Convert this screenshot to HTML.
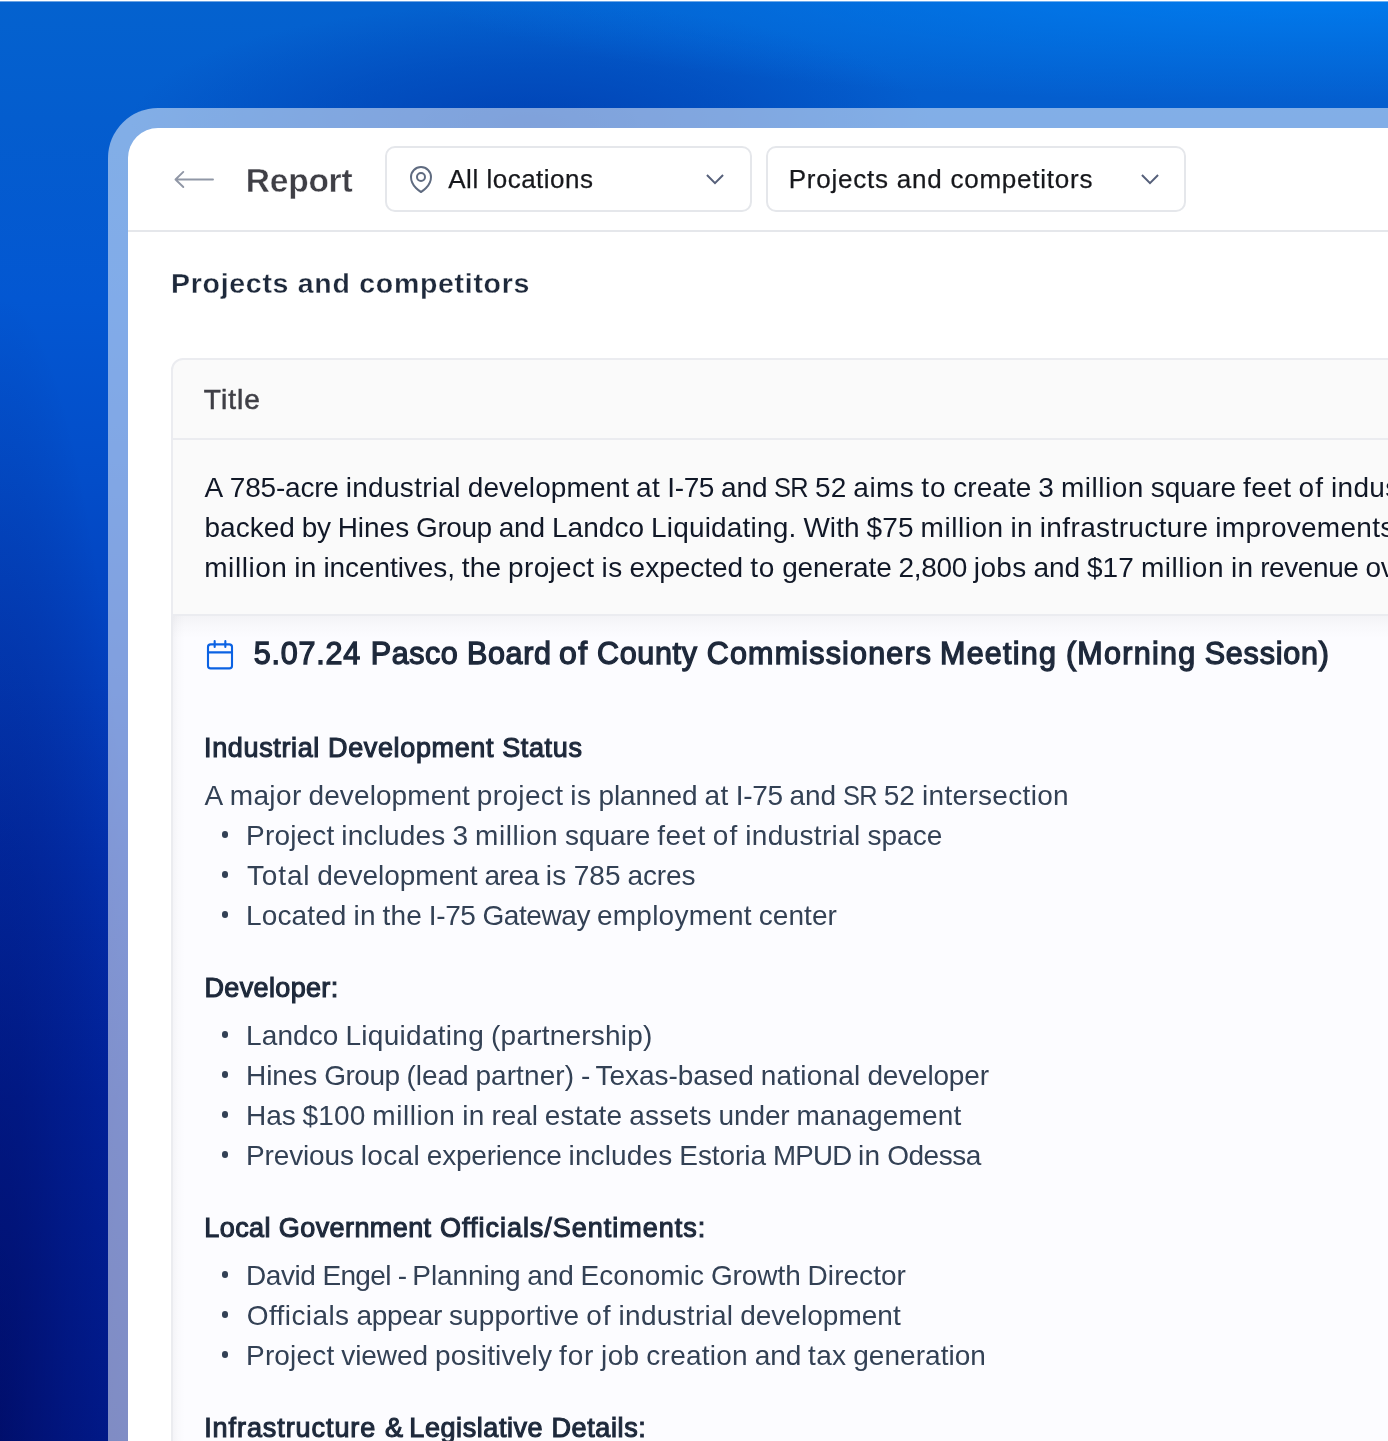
<!DOCTYPE html>
<html lang="en">
<head>
<meta charset="utf-8">
<title>Report</title>
<style>
*{box-sizing:border-box;margin:0;padding:0}
html,body{width:1388px;height:1441px;overflow:hidden}
body{
  position:relative;
  font-family:"Liberation Sans",sans-serif;
  background:
    radial-gradient(ellipse 900px 115px at 1320px -12px, rgba(0,126,242,.92) 0%, rgba(0,126,242,0) 100%),
    radial-gradient(ellipse 400px 120px at 530px 124px, rgba(0,62,176,.82) 0%, rgba(0,62,176,.45) 50%, rgba(0,62,176,0) 100%),
    radial-gradient(ellipse 150px 1150px at 0px 1441px, rgba(0,6,86,.62) 0%, rgba(0,6,86,.3) 45%, rgba(0,6,86,0) 100%),
    linear-gradient(180deg, #0462cf 0px, #045dce 120px, #0357d2 300px, #034dc9 480px, #033fbd 680px, #0231b0 860px, #0124a0 1100px, #011c90 1441px);
}
.topline{position:absolute;left:0;top:0;width:1388px;height:2px;background:linear-gradient(180deg,#fff 0,#fff 1px,rgba(255,255,255,.42) 1px,rgba(255,255,255,.42) 2px)}
.frame{
  position:absolute;left:108px;top:108px;width:1400px;height:1500px;
  border-radius:50px 0 0 0;background:rgba(255,255,255,.5);
}
.app{
  position:absolute;left:128px;top:128px;width:1400px;height:1500px;
  border-radius:30px 0 0 0;background:#fff;overflow:hidden;
}
.hdr{position:absolute;left:0;top:0;width:100%;height:104px;border-bottom:2px solid #e5e7eb}
.abs{position:absolute;white-space:nowrap}
.sel{position:absolute;top:18px;height:66px;border:2px solid #e5e7eb;border-radius:10px;background:#fff}
.t{position:absolute;white-space:nowrap;line-height:40px;height:40px}
.txt{position:absolute;left:0;top:0;width:1388px;height:1441px;overflow:hidden;will-change:transform}
.w span{position:absolute;top:0;left:0;transform-origin:0 50%}
.bul{position:absolute;width:6.400px;height:6.400px;border-radius:50%;background:#334155}
</style>
</head>
<body>
<div class="topline"></div>
<div class="frame"></div>
<div class="app">
  <div class="hdr">
    <svg class="abs" style="left:45px;top:40px" width="44" height="24" viewBox="0 0 44 24" fill="none" stroke="#9097a6" stroke-width="1.9" stroke-linecap="round" stroke-linejoin="round"><path d="M40 11.450H2.500M10.300 3.900L2.500 11.450l7.800 7.550"/></svg>
    <div class="sel" style="left:257px;width:367px">
      <svg class="abs" style="left:18px;top:15px" width="32" height="32" viewBox="0 0 24 24" fill="none" stroke="#5f6b80" stroke-width="1.5" stroke-linecap="round" stroke-linejoin="round"><path d="M15 10.500a3 3 0 1 1-6 0 3 3 0 0 1 6 0z"/><path d="M19.500 10.500c0 7.142-7.500 11.250-7.500 11.250S4.500 17.642 4.500 10.500a7.500 7.500 0 1 1 15 0z"/></svg>
      <svg class="abs" style="left:317.800px;top:24.900px;overflow:visible" width="20" height="12" viewBox="0 0 20 12" fill="none" stroke="#56607a" stroke-width="2" stroke-linejoin="miter"><path d="M1.950 2l8.050 8.100 8.050-8.100"/></svg>
    </div>
    <div class="sel" style="left:638px;width:420px">
      <svg class="abs" style="left:371.750px;top:24.900px;overflow:visible" width="20" height="12" viewBox="0 0 20 12" fill="none" stroke="#56607a" stroke-width="2" stroke-linejoin="miter"><path d="M1.950 2l8.050 8.100 8.050-8.100"/></svg>
    </div>
  </div>
  <div class="tbl" style="position:absolute;left:43px;top:230px;width:1400px;height:1300px;border:2px solid #ebecf0;border-radius:12px 0 0 0;background:#fafafa;overflow:hidden">
    <div style="position:absolute;left:0;top:0;width:100%;height:80px;border-bottom:2px solid #ebecf0"></div>
    <div style="position:absolute;left:0;top:254px;width:100%;height:1100px;border-top:2px solid #ebecf0;background:linear-gradient(90deg,rgba(20,20,40,.035) 0,rgba(20,20,40,.012) 5px,rgba(20,20,40,0) 12px),linear-gradient(180deg,#f3f3f6 0,#f8f8fb 9px,#fcfcff 22px)"></div>
  </div>
</div>
<div class="txt">
<div class="t" id="report" style="left:245.84px;top:161.00px;font-size:33.5px;color:#3f3f46;font-weight:700;-webkit-text-stroke:0.4px #fff;letter-spacing:-0.243px">Report</div>
<div class="t" id="allloc" style="left:448.28px;top:159.00px;font-size:26px;color:#17181c;-webkit-text-stroke:0.25px #17181c;letter-spacing:0.501px">All locations</div>
<div class="t" id="sel2" style="left:788.71px;top:159.00px;font-size:26px;color:#17181c;-webkit-text-stroke:0.25px #17181c;letter-spacing:0.766px">Projects and competitors</div>
<div class="t" id="h1" style="left:171.07px;top:263.00px;font-size:28.5px;color:#1e293b;font-weight:700;-webkit-text-stroke:0.3px #fff;letter-spacing:0.706px">Projects and competitors</div>
<div class="t" id="thtitle" style="left:203.78px;top:380.00px;font-size:28px;color:#3f3f46;-webkit-text-stroke:0.55px #3f3f46;letter-spacing:1.080px">Title</div>
<div class="t w" id="s1" style="left:204.60px;top:468.00px;font-size:28px;color:#111827"><span style="left:0.00px;letter-spacing:-0.431px">A</span> <span style="left:25.17px;letter-spacing:-0.193px">785-acre</span> <span style="left:141.06px;letter-spacing:0.317px">industrial</span> <span style="left:263.21px;letter-spacing:0.087px">development</span> <span style="left:431.43px;letter-spacing:0.500px">at</span> <span style="left:462.70px;letter-spacing:-0.378px">I-75</span> <span style="left:516.36px;letter-spacing:-0.099px">and</span> <span style="left:569.71px;letter-spacing:-0.800px;transform:scaleX(0.9066)">SR</span> <span style="left:610.45px;letter-spacing:0.133px">52</span> <span style="left:648.78px;letter-spacing:0.455px">aims</span> <span style="left:716.65px;letter-spacing:0.868px">to</span> <span style="left:748.66px;letter-spacing:0.045px">create</span> <span style="left:833.67px;letter-spacing:0.132px">3</span> <span style="left:856.30px;letter-spacing:0.528px">million</span> <span style="left:946.28px;letter-spacing:-0.063px">square</span> <span style="left:1038.44px;letter-spacing:0.445px">feet</span> <span style="left:1093.84px;letter-spacing:1.155px">of</span> <span id="s1_m" style="left:1126.43px;letter-spacing:0.317px">industrial</span> <span style="left:1248.58px;letter-spacing:-0.370px">space,</span></div>
<div class="t w" id="s2" style="left:204.53px;top:508.00px;font-size:28px;color:#111827"><span style="left:0.00px;letter-spacing:0.013px">backed</span> <span style="left:97.30px;letter-spacing:-0.315px">by</span> <span style="left:133.17px;letter-spacing:-0.029px">Hines</span> <span style="left:211.54px;letter-spacing:-0.437px">Group</span> <span style="left:294.11px;letter-spacing:-0.090px">and</span> <span style="left:347.48px;letter-spacing:0.043px">Landco</span> <span style="left:446.53px;letter-spacing:0.183px">Liquidating.</span> <span style="left:598.88px;letter-spacing:0.045px">With</span> <span style="left:661.99px;letter-spacing:0.143px">$75</span> <span style="left:716.06px;letter-spacing:0.535px">million</span> <span style="left:806.09px;letter-spacing:0.220px">in</span> <span style="left:835.25px;letter-spacing:0.374px">infrastructure</span> <span id="s2_m" style="left:1010.81px;letter-spacing:0.281px">improvements</span> <span style="left:1196.95px;letter-spacing:-0.090px">and</span> <span style="left:1250.32px;letter-spacing:0.031px">$55.8</span></div>
<div class="t w" id="s3" style="left:204.28px;top:548.00px;font-size:28px;color:#111827"><span style="left:0.00px;letter-spacing:0.535px">million</span> <span style="left:90.02px;letter-spacing:0.219px">in</span> <span style="left:119.18px;letter-spacing:-0.082px">incentives,</span> <span style="left:257.50px;letter-spacing:0.152px">the</span> <span style="left:303.81px;letter-spacing:0.341px">project</span> <span style="left:397.16px;letter-spacing:0.500px">is</span> <span style="left:425.31px;letter-spacing:-0.002px">expected</span> <span style="left:545.86px;letter-spacing:0.875px">to</span> <span style="left:577.89px;letter-spacing:-0.135px">generate</span> <span style="left:694.27px;letter-spacing:-0.344px">2,800</span> <span style="left:769.55px;letter-spacing:0.352px">jobs</span> <span style="left:829.25px;letter-spacing:-0.090px">and</span> <span style="left:882.63px;letter-spacing:0.142px">$17</span> <span style="left:936.70px;letter-spacing:0.535px">million</span> <span style="left:1026.72px;letter-spacing:0.219px">in</span> <span style="left:1055.88px;letter-spacing:-0.402px">revenue</span> <span id="s3_m" style="left:1161.18px;letter-spacing:-0.164px">over</span> <span style="left:1221.92px;letter-spacing:0.142px">40</span> <span style="left:1260.28px;letter-spacing:-0.282px">years.</span></div>
<div class="t w" id="mt" style="left:253.10px;top:633.00px;font-size:30.5px;color:#1e293b;-webkit-text-stroke:1.3px #1e293b"><span id="mt_0" style="left:0.55px;letter-spacing:0.822px">5.07.24</span> <span id="mt_1" style="left:117.75px;letter-spacing:0.526px">Pasco</span> <span id="mt_2" style="left:213.81px;letter-spacing:0.680px">Board</span> <span id="mt_3" style="left:306.21px;letter-spacing:1.300px;transform:scaleX(1.0476)">of</span> <span id="mt_4" style="left:343.95px;letter-spacing:0.662px">County</span> <span id="mt_5" style="left:453.64px;letter-spacing:1.180px">Commissioners</span> <span id="mt_6" style="left:686.98px;letter-spacing:1.214px">Meeting</span> <span id="mt_7" style="left:812.80px;letter-spacing:1.299px">(Morning</span> <span id="mt_8" style="left:951.63px;letter-spacing:0.796px">Session)</span></div>
<div class="t" id="a0" style="left:204.10px;top:728.00px;font-size:27px;color:#1e293b;-webkit-text-stroke:1.1px #1e293b;letter-spacing:0.629px">Industrial Development Status</div>
<div class="t w" id="a1" style="left:204.55px;top:776.00px;font-size:28px;color:#334155"><span style="left:0.00px;letter-spacing:-0.419px">A</span> <span style="left:25.19px;letter-spacing:0.371px">major</span> <span style="left:103.99px;letter-spacing:0.097px">development</span> <span style="left:272.31px;letter-spacing:0.342px">project</span> <span style="left:365.68px;letter-spacing:0.501px">is</span> <span style="left:393.83px;letter-spacing:-0.063px">planned</span> <span style="left:499.98px;letter-spacing:0.508px">at</span> <span style="left:531.27px;letter-spacing:-0.371px">I-75</span> <span style="left:584.97px;letter-spacing:-0.089px">and</span> <span style="left:638.35px;letter-spacing:-0.800px;transform:scaleX(0.9072)">SR</span> <span style="left:679.11px;letter-spacing:0.143px">52</span> <span style="left:717.48px;letter-spacing:0.312px">intersection</span></div>
<i class="bul" style="left:221.70px;top:831.20px"></i><div class="t w" id="a2" style="left:246.04px;top:816.00px;font-size:28px;color:#334155"><span style="left:0.00px;letter-spacing:0.176px">Project</span> <span style="left:95.30px;letter-spacing:0.175px">includes</span> <span style="left:206.36px;letter-spacing:0.140px">3</span> <span style="left:229.00px;letter-spacing:0.534px">million</span> <span style="left:319.02px;letter-spacing:-0.057px">square</span> <span style="left:411.22px;letter-spacing:0.451px">feet</span> <span style="left:466.66px;letter-spacing:1.161px">of</span> <span style="left:499.26px;letter-spacing:0.323px">industrial</span> <span style="left:621.47px;letter-spacing:0.021px">space</span></div>
<i class="bul" style="left:221.70px;top:871.20px"></i><div class="t w" id="a3" style="left:247.01px;top:856.00px;font-size:28px;color:#334155"><span style="left:0.00px;letter-spacing:0.849px">Total</span> <span style="left:70.27px;letter-spacing:-0.002px">development</span> <span style="left:237.46px;letter-spacing:-0.416px">area</span> <span style="left:298.72px;letter-spacing:0.429px">is</span> <span style="left:326.68px;letter-spacing:0.038px">785</span> <span style="left:380.40px;letter-spacing:-0.066px">acres</span></div>
<i class="bul" style="left:221.70px;top:911.20px"></i><div class="t w" id="a4" style="left:246.04px;top:896.00px;font-size:28px;color:#334155"><span style="left:0.00px;letter-spacing:0.125px">Located</span> <span style="left:107.44px;letter-spacing:0.206px">in</span> <span style="left:136.56px;letter-spacing:0.136px">the</span> <span style="left:182.82px;letter-spacing:-0.386px">I-75</span> <span style="left:236.44px;letter-spacing:-0.412px">Gateway</span> <span style="left:350.97px;letter-spacing:0.229px">employment</span> <span style="left:512.69px;letter-spacing:0.073px">center</span></div>
<div class="t" id="b0" style="left:204.54px;top:968.00px;font-size:27px;color:#1e293b;-webkit-text-stroke:1.1px #1e293b;letter-spacing:0.342px">Developer:</div>
<i class="bul" style="left:221.70px;top:1031.20px"></i><div class="t w" id="b1" style="left:246.04px;top:1016.00px;font-size:28px;color:#334155"><span style="left:0.00px;letter-spacing:0.104px">Landco</span> <span style="left:99.44px;letter-spacing:0.288px">Liquidating</span> <span style="left:245.02px;letter-spacing:0.217px">(partnership)</span></div>
<i class="bul" style="left:221.70px;top:1071.20px"></i><div class="t w" id="b2" style="left:246.04px;top:1056.00px;font-size:28px;color:#334155"><span style="left:0.00px;letter-spacing:-0.071px">Hines</span> <span style="left:78.14px;letter-spacing:-0.482px">Group</span> <span style="left:160.46px;letter-spacing:-0.051px">(lead</span> <span style="left:229.37px;letter-spacing:0.084px">partner)</span> <span style="left:334.99px;letter-spacing:-1.627px">-</span> <span style="left:349.59px;letter-spacing:-0.045px">Texas-based</span> <span style="left:514.77px;letter-spacing:0.205px">national</span> <span style="left:621.39px;letter-spacing:-0.178px">developer</span></div>
<i class="bul" style="left:221.70px;top:1111.20px"></i><div class="t w" id="b3" style="left:246.04px;top:1096.00px;font-size:28px;color:#334155"><span style="left:0.00px;letter-spacing:-0.066px">Has</span> <span style="left:56.52px;letter-spacing:0.140px">$100</span> <span style="left:126.30px;letter-spacing:0.533px">million</span> <span style="left:216.31px;letter-spacing:0.218px">in</span> <span style="left:245.46px;letter-spacing:-0.097px">real</span> <span style="left:298.69px;letter-spacing:0.217px">estate</span> <span style="left:383.20px;letter-spacing:0.257px">assets</span> <span style="left:472.59px;letter-spacing:-0.135px">under</span> <span style="left:550.46px;letter-spacing:0.142px">management</span></div>
<i class="bul" style="left:221.70px;top:1151.20px"></i><div class="t w" id="b4" style="left:246.04px;top:1136.00px;font-size:28px;color:#334155"><span style="left:0.00px;letter-spacing:-0.145px">Previous</span> <span style="left:114.68px;letter-spacing:0.329px">local</span> <span style="left:180.82px;letter-spacing:-0.218px">experience</span> <span style="left:322.53px;letter-spacing:0.135px">includes</span> <span style="left:433.25px;letter-spacing:-0.071px">Estoria</span> <span style="left:526.81px;letter-spacing:-0.800px;transform:scaleX(0.9886)">MPUD</span> <span style="left:612.05px;letter-spacing:0.185px">in</span> <span style="left:641.12px;letter-spacing:-0.476px">Odessa</span></div>
<div class="t w" id="c0" style="left:204.41px;top:1208.00px;font-size:27px;color:#1e293b;-webkit-text-stroke:1.1px #1e293b"><span id="c0_0" style="left:-0.10px;letter-spacing:0.423px">Local</span> <span id="c0_1" style="left:74.44px;letter-spacing:0.410px">Government</span> <span id="c0_2" style="left:235.62px;letter-spacing:0.978px">Officials/Sentiments:</span></div>
<i class="bul" style="left:221.70px;top:1271.20px"></i><div class="t w" id="c1" style="left:246.04px;top:1256.00px;font-size:28px;color:#334155"><span style="left:0.00px;letter-spacing:-0.423px">David</span> <span style="left:76.37px;letter-spacing:-0.636px">Engel</span> <span style="left:151.71px;letter-spacing:-1.630px">-</span> <span style="left:166.31px;letter-spacing:-0.108px">Planning</span> <span style="left:281.34px;letter-spacing:-0.142px">and</span> <span style="left:334.53px;letter-spacing:0.066px">Economic</span> <span style="left:464.90px;letter-spacing:-0.079px">Growth</span> <span style="left:561.58px;letter-spacing:0.039px">Director</span></div>
<i class="bul" style="left:221.70px;top:1311.20px"></i><div class="t w" id="c2" style="left:246.71px;top:1296.00px;font-size:28px;color:#334155"><span style="left:0.00px;letter-spacing:0.415px">Officials</span> <span style="left:109.69px;letter-spacing:-0.250px">appear</span> <span style="left:202.27px;letter-spacing:0.112px">supportive</span> <span style="left:339.47px;letter-spacing:1.094px">of</span> <span style="left:371.90px;letter-spacing:0.262px">industrial</span> <span style="left:493.47px;letter-spacing:0.018px">development</span></div>
<i class="bul" style="left:221.70px;top:1351.20px"></i><div class="t w" id="c3" style="left:246.04px;top:1336.00px;font-size:28px;color:#334155"><span style="left:0.00px;letter-spacing:0.170px">Project</span> <span style="left:95.26px;letter-spacing:-0.068px">viewed</span> <span style="left:188.94px;letter-spacing:0.201px">positively</span> <span style="left:313.03px;letter-spacing:0.817px">for</span> <span style="left:355.08px;letter-spacing:0.319px">job</span> <span style="left:400.33px;letter-spacing:0.229px">creation</span> <span style="left:508.70px;letter-spacing:-0.098px">and</span> <span style="left:562.05px;letter-spacing:0.287px">tax</span> <span style="left:607.19px;letter-spacing:0.042px">generation</span></div>
<div class="t w" id="d0" style="left:204.07px;top:1408.00px;font-size:27px;color:#1e293b;-webkit-text-stroke:1.1px #1e293b"><span id="d0_0" style="left:0.10px;letter-spacing:0.930px">Infrastructure</span> <span id="d0_1" style="left:180.97px;letter-spacing:0.000px">&amp;</span> <span id="d0_2" style="left:205.24px;letter-spacing:0.574px">Legislative</span> <span id="d0_3" style="left:347.41px;letter-spacing:0.611px">Details:</span></div>
<svg class="abs" style="left:204px;top:638.50px" width="32" height="32" viewBox="0 0 24 24" fill="none" stroke="#0b62e3" stroke-width="1.58" stroke-linecap="round" stroke-linejoin="round"><rect x="3" y="4" width="18" height="18" rx="2"/><path d="M16 1.600v4.400M8 1.600v4.400M3 10h18"/></svg>
</div>
</body>
</html>
